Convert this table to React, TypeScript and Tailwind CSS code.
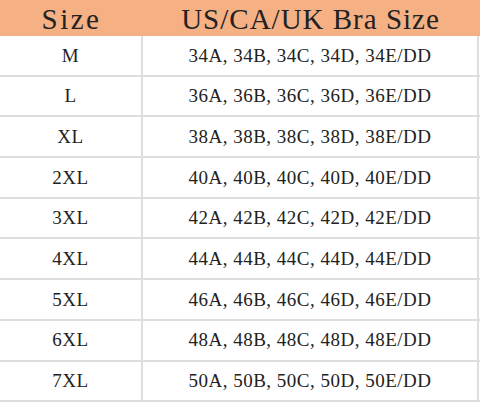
import React from 'react';

const rows = [
  ['M', '34'],
  ['L', '36'],
  ['XL', '38'],
  ['2XL', '40'],
  ['3XL', '42'],
  ['4XL', '44'],
  ['5XL', '46'],
  ['6XL', '48'],
  ['7XL', '50'],
];

export default function App() {
  return (
    <div className="w-[480px] h-[404px] bg-white overflow-hidden text-[#222]" style={{ fontFamily: '"Liberation Serif", serif' }}>
      <div className="grid grid-cols-[143px_1fr] h-[36px] bg-[#f5b084] text-[29px] leading-none items-center pt-[3px]">
        <div className="text-center tracking-[2.5px]">Size</div>
        <div className="text-center tracking-[1px] pr-[2px]">US/CA/UK Bra Size</div>
      </div>
      {rows.map(([size, band]) => (
        <div key={size} className="grid grid-cols-[143px_1fr] h-[40.7px] border-b-2 border-[#dedede] text-[19px] tracking-[0.5px]">
          <div className="flex items-center justify-center border-r-2 border-[#dedede] pt-[1px]">{size}</div>
          <div className="flex items-center justify-center border-r-2 border-[#dedede] mr-[1px] pt-[1px]">
            {`${band}A, ${band}B, ${band}C, ${band}D, ${band}E/DD`}
          </div>
        </div>
      ))}
    </div>
  );
}
